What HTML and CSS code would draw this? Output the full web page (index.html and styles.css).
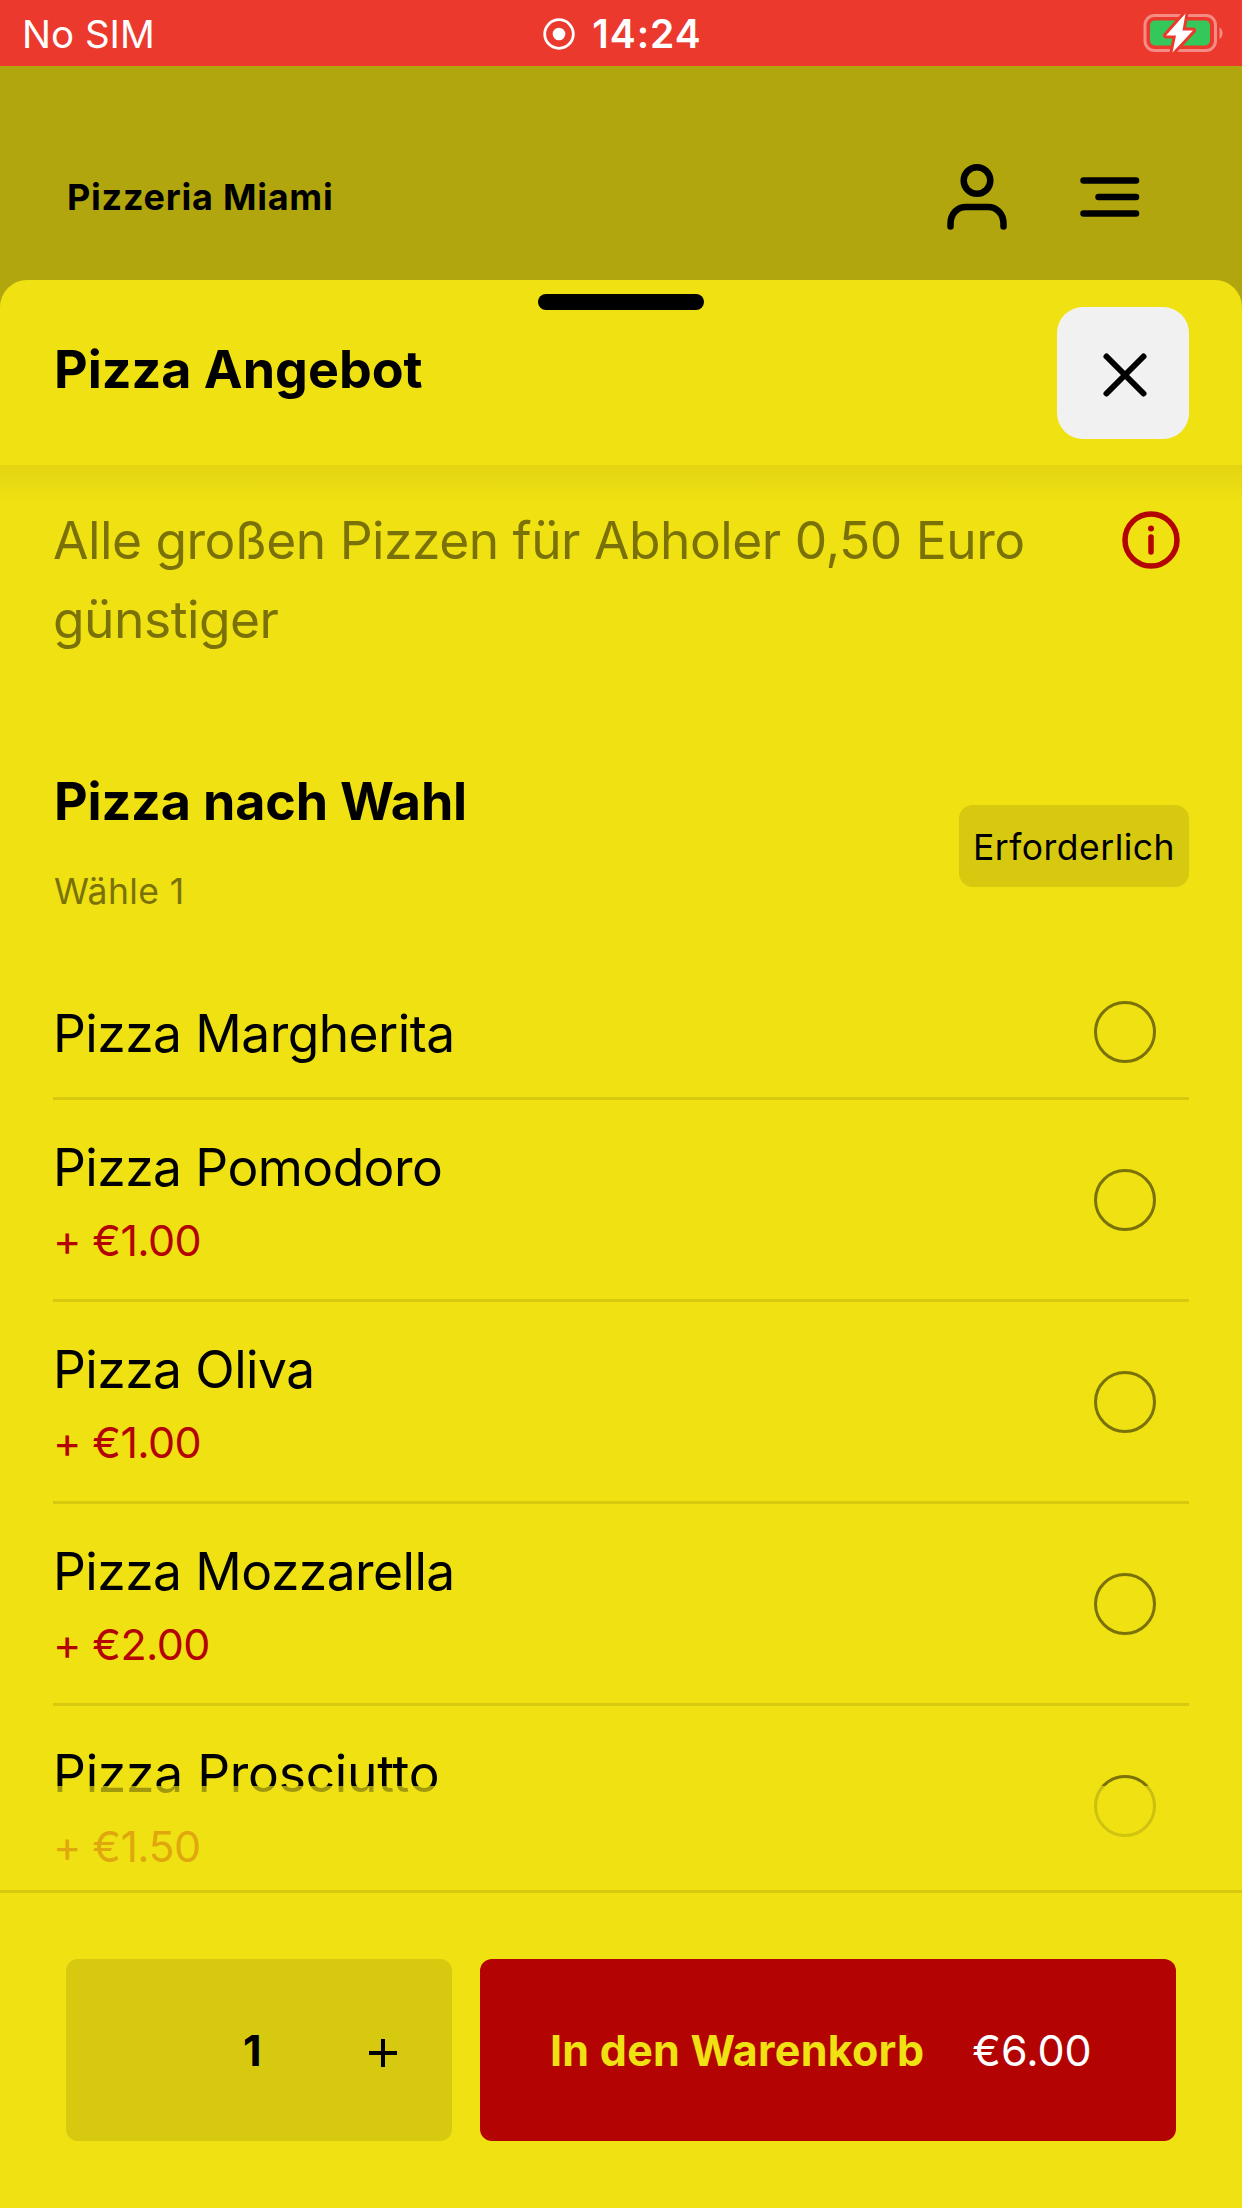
FILE: index.html
```html
<!DOCTYPE html>
<html lang="de">
<head>
<meta charset="utf-8">
<title>Pizza Angebot</title>
<link rel="stylesheet" href="styles.css">
</head>
<body>
<div class="screen">
  <div class="status">
    <span class="carrier">No SIM</span>
    <div class="clock">
      <svg width="32" height="32" viewBox="0 0 32 32"><circle cx="16" cy="16" r="14.3" fill="none" stroke="#fff" stroke-width="2.8"/><circle cx="16" cy="16" r="6.3" fill="#fff"/></svg>
      <span class="time">14:24</span>
    </div>
    <svg class="battery" width="80" height="42" viewBox="0 0 80 42">
      <rect x="2" y="3.500" width="70.500" height="35" rx="9.500" fill="none" stroke="#f48c85" stroke-width="3"/>
      <path d="M76.500 15.500c4 2 4 9.500 0 11.500z" fill="#f48c85"/>
      <rect x="7" y="8.500" width="60" height="25" rx="5" fill="#34c759"/>
      <path d="M42.500 1.500L23 23.500H33L29.500 40.500L50 18.500H39.500Z" fill="#fff" stroke="#eb392e" stroke-width="6" stroke-linejoin="round" paint-order="stroke"/>
    </svg>
  </div>
  <header class="topbar">
    <span class="brand">Pizzeria Miami</span>
    <svg class="user" width="62" height="68" viewBox="0 0 62 68" fill="none" stroke="#000" stroke-width="6.500" stroke-linecap="round"><circle cx="31" cy="17.500" r="13.300"/><path d="M4.500 63.500V61C4.500 50 12 44 20 44H42C50 44 57.500 50 57.500 61V63.500"/></svg>
    <svg class="menu" width="60" height="42" viewBox="0 0 60 42" stroke="#000" stroke-width="6.500" stroke-linecap="round"><path d="M3.500 4.500H56M18.500 21H56M3.500 37.500H56"/></svg>
  </header>
  <section class="sheet">
    <div class="handle"></div>
    <div class="sheet-head">
      <h1 class="heading">Pizza Angebot</h1>
      <button class="close"><svg width="46" height="46" viewBox="0 0 46 46" stroke="#000" stroke-width="6" stroke-linecap="round"><path d="M4.500 4.500L41.500 41.500M41.500 4.500L4.500 41.500"/></svg></button>
    </div>
    <div class="content">
      <div class="description">
        <p class="desc-text">Alle großen Pizzen für Abholer 0,50 Euro günstiger</p>
        <svg class="info" width="58" height="58" viewBox="0 0 58 58"><circle cx="29" cy="29" r="26" fill="none" stroke="#b30303" stroke-width="5.500"/><circle cx="29" cy="17.500" r="3" fill="#b30303"/><path d="M29 26V41" stroke="#b30303" stroke-width="5.500" stroke-linecap="round"/></svg>
      </div>
      <div class="group">
        <div>
          <h2 class="group-title">Pizza nach Wahl</h2>
          <p class="hint">Wähle 1</p>
        </div>
        <span class="badge">Erforderlich</span>
      </div>
      <ul class="options">
        <li class="option plain"><p class="name">Pizza Margherita</p><span class="radio"></span></li>
        <li class="option"><div><p class="name">Pizza Pomodoro</p><p class="extra">+ €1.00</p></div><span class="radio"></span></li>
        <li class="option"><div><p class="name">Pizza Oliva</p><p class="extra">+ €1.00</p></div><span class="radio"></span></li>
        <li class="option"><div><p class="name">Pizza Mozzarella</p><p class="extra">+ €2.00</p></div><span class="radio"></span></li>
        <li class="option"><div><p class="name wide">Pizza Prosciutto</p><p class="extra">+ €1.50</p></div><span class="radio"></span></li>
      </ul>
      <div class="fade"></div>
    </div>
    <footer class="footer">
      <div class="quantity"><span class="count">1</span><svg width="30" height="30" viewBox="0 0 30 30" stroke="#000" stroke-width="4"><path d="M1 15H29M15 1V29"/></svg></div>
      <button class="add"><span class="add-label">In den Warenkorb</span><span class="add-price">€6.00</span></button>
    </footer>
  </section>
</div>
</body>
</html>
```

FILE: styles.css
```css
* { box-sizing: border-box; }
body { margin: 0; font-family: Inter, "Liberation Sans", sans-serif; color: #000; }
h1, h2, p, ul { margin: 0; padding: 0; }
svg { display: block; flex: none; }
span, p, h1, h2 { white-space: nowrap; }
button { border: 0; font-family: inherit; padding: 0; }
.screen { width: 1242px; height: 2208px; overflow: hidden; background: #b1a60d; display: flex; flex-direction: column; }

.status { height: 66px; background: #eb392e; color: #fff; display: grid; grid-template-columns: 1fr auto 1fr; align-items: center; padding: 2px 19px 0 22px; }
.carrier { font-size: 38.500px; line-height: 46px; }
.clock { display: flex; align-items: center; gap: 17px; }
.time { font-size: 39px; line-height: 46px; font-weight: 600; letter-spacing: 1px; }
.battery { justify-self: end; margin-top: -3px; }

.topbar { height: 214px; display: flex; align-items: center; padding: 48px 102px 0 67px; }
.brand { flex: 1; font-size: 36px; font-weight: 700; letter-spacing: .75px; }
.user { margin-right: 72px; }

.sheet { height: 1928px; background: #efe112; border-radius: 27px 27px 0 0; display: flex; flex-direction: column; overflow: hidden; }
.handle { width: 166px; height: 16px; border-radius: 8px; background: #000; margin: 14px auto 0; flex: none; }
.sheet-head { height: 155px; flex: none; display: flex; justify-content: space-between; align-items: flex-start; padding: 0 53px 0 54px; }
.heading, .group-title { font-size: 52px; font-weight: 700; line-height: 64px; }
.heading { margin-top: 28px; }
.close { width: 132px; height: 132px; margin-top: -3px; border-radius: 26px; background: #f1f1f1; display: flex; align-items: center; justify-content: center; }
.close svg { margin-left: 3px; margin-top: 3px; }

.content { height: 1425px; flex: none; position: relative; overflow: hidden; padding: 36px 53px 0; background: linear-gradient(#e2d411, #efe112 36px); }
.description { height: 260px; display: flex; justify-content: space-between; align-items: flex-start; }
.desc-text { width: 1000px; white-space: normal; font-size: 51.500px; line-height: 79px; letter-spacing: -.5px; color: #7a7209; }
.info { margin: 10px 9px 0 0; }
.group { height: 199px; display: flex; justify-content: space-between; padding-left: 1px; }
.group-title { margin-top: 9px; letter-spacing: -.15px; }
.hint { font-size: 35.500px; line-height: 44px; margin-top: 36px; letter-spacing: .4px; color: #7a7209; }
.badge { width: 230px; height: 82px; margin-top: 44px; border-radius: 14px; background: #d6c910; font-size: 35.500px; line-height: 85px; letter-spacing: .5px; text-align: center; }
.options { list-style: none; }
.option { height: 202px; border-bottom: 3px solid #d6c910; display: flex; justify-content: space-between; align-items: center; padding: 1px 33px 0 0; }
.option.plain { height: 140px; padding-top: 6px; }
.name { font-size: 51.500px; line-height: 64px; letter-spacing: -.55px; }
.option.plain .name { padding-top: 2px; }
.option:not(.plain) .name { padding-top: 2px; }
.name.wide { letter-spacing: -.25px; }
.extra { font-size: 43px; line-height: 54px; margin-top: 14px; letter-spacing: -.6px; color: #b30303; }
.radio { width: 62px; height: 62px; border: 3px solid #7a7209; border-radius: 50%; }
.fade { position: absolute; left: 0; right: 0; bottom: 0; height: 104px; background: linear-gradient(rgba(239, 225, 18, .67), rgba(239, 225, 18, .74) 45%); }

.footer { height: 318px; flex: none; border-top: 3px solid #d6c910; padding: 66px 66px 0; display: flex; gap: 28px; }
.quantity, .add { height: 182px; border-radius: 12px; display: flex; align-items: center; }
.quantity { width: 386px; background: #d6c910; padding: 0 54px 0 177px; justify-content: space-between; }
.quantity svg { margin-top: 5px; }
.count { font-size: 43px; font-weight: 700; }
.add { flex: 1; background: #b30303; padding: 0 0 0 70px; gap: 48px; font-size: 43px; }
.add-label { color: #efe112; font-weight: 700; letter-spacing: .25px; }
.add-price { color: #fff; }
```
